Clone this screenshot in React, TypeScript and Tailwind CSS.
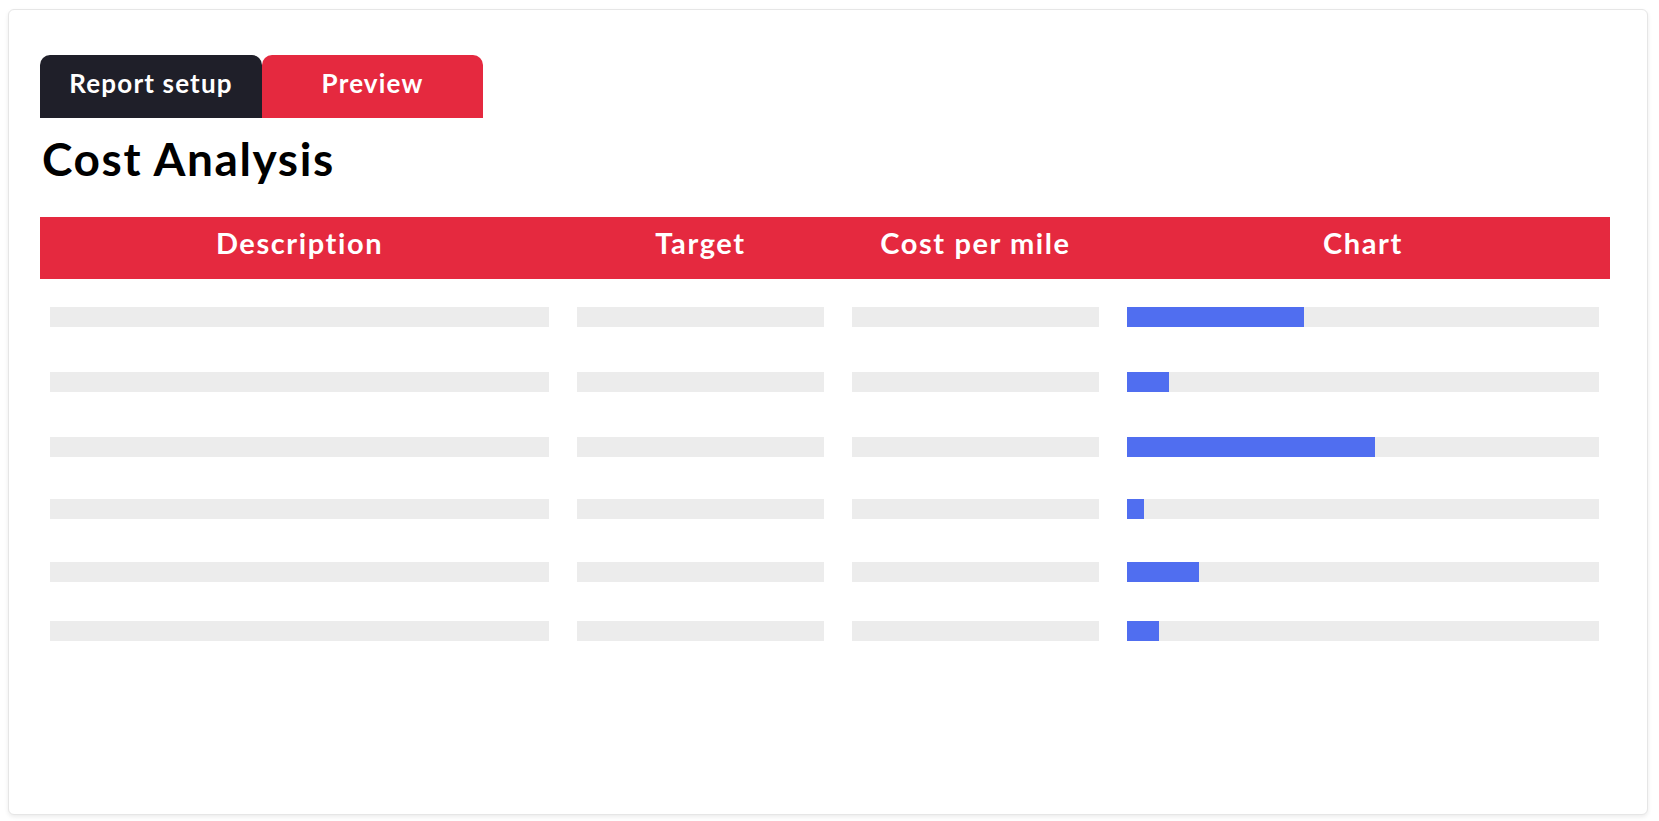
import React from 'react';

const rows = [
  { pct: 37.5, gap: 'mt-[28px]' },
  { pct: 9, gap: 'mt-[45px]' },
  { pct: 52.5, gap: 'mt-[45px]' },
  { pct: 3.5, gap: 'mt-[42px]' },
  { pct: 15.2, gap: 'mt-[43px]' },
  { pct: 6.8, gap: 'mt-[39px]' },
];

const columns = ['Description', 'Target', 'Cost per mile', 'Chart'];

export default function App() {
  return (
    <div className="min-h-screen bg-white pt-[9px] pl-2 pr-[11px] pb-[6px] font-['Lato',sans-serif]">
      <div className="h-[806px] rounded-md border border-[#e6e6e6] bg-white pl-[31px] pr-[37px] pt-[45px] shadow-[0_2px_4px_rgba(0,0,0,0.08)]">
        {/* Tabs */}
        <div className="flex">
          <button className="flex h-[63px] w-[222px] items-center justify-center rounded-t-[10px] bg-[#1f1f29] pb-[8px] text-[26px] font-bold leading-none tracking-[0.045em] text-white">
            Report setup
          </button>
          <button className="flex h-[63px] w-[221px] items-center justify-center rounded-t-[10px] bg-[#e5293f] pb-[8px] text-[26px] font-bold leading-none tracking-[0.045em] text-white">
            Preview
          </button>
        </div>

        <h1 className="mt-[18px] ml-[2px] text-[46px] font-bold leading-none tracking-[0.035em] text-black">
          Cost Analysis
        </h1>

        {/* Table */}
        <div className="mt-[35px]">
          <div className="grid h-[62px] grid-cols-[499fr_247fr_247fr_472fr] items-center gap-x-[28px] bg-[#e5293f] pl-[10px] pr-[11px] pb-[12px]">
            {columns.map((c) => (
              <div key={c} className="text-center text-[29px] font-bold leading-none tracking-[0.055em] text-white">
                {c}
              </div>
            ))}
          </div>

          {rows.map((r, i) => (
            <div
              key={i}
              className={`${r.gap} grid h-5 grid-cols-[499fr_247fr_247fr_472fr] gap-x-[28px] pl-[10px] pr-[11px]`}
            >
              <div className="bg-[#ececec]" />
              <div className="bg-[#ececec]" />
              <div className="bg-[#ececec]" />
              <div className="bg-[#ececec]">
                <div className="h-full bg-[#506ef0]" style={{ width: `${r.pct}%` }} />
              </div>
            </div>
          ))}
        </div>
      </div>
    </div>
  );
}
